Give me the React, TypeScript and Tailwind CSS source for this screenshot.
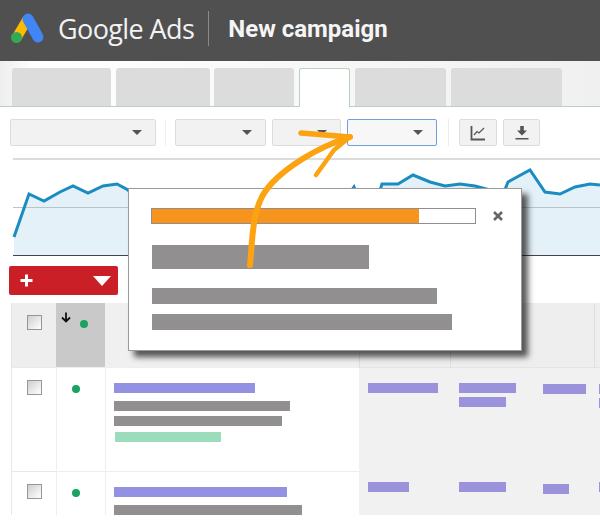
import type { ReactNode } from "react";

function Caret() {
  return <span className="w-0 h-0 border-x-[5px] border-t-[5px] border-x-transparent border-t-[#555]" />;
}

function Dropdown({ width, active }: { width: string; active?: boolean }) {
  return (
    <div
      className={`${width} h-[27px] flex items-center justify-end pr-[13px] rounded-[2px] border ${
        active ? "border-[#6f9fdc] bg-[#f7f7f7]" : "border-[#dcdcdc] bg-[#f2f2f2]"
      }`}
    >
      <Caret />
    </div>
  );
}

function IconButton({ children, width }: { children: ReactNode; width: string }) {
  return (
    <div className={`${width} h-[27px] flex items-center justify-center rounded-[2px] border border-[#dcdcdc] bg-[#f2f2f2]`}>
      {children}
    </div>
  );
}

function Bar({ className }: { className: string }) {
  return <div className={`h-[10px] ${className}`} />;
}

function Checkbox() {
  return <div className="w-[15px] h-[15px] border-[1.5px] border-[#969696] bg-gradient-to-br from-[#cfcfcf] to-white" />;
}

function Dot() {
  return <div className="w-2 h-2 rounded-full bg-[#1aa260]" />;
}

const line =
  "M14 237L29 194L44 201L60 192L73 186L88 193L103 186L117 184L128 190L135 200L345 200L354 187L358 197L378 197L382 184L398 184L413 175L430 182L445 186L460 184L475 186L490 190L504 192L508 182L517 177L530 170L545 192L560 194L575 187L590 184L600 185";

export default function App() {
  return (
    <div className="relative w-[600px] h-[525px] overflow-hidden bg-white font-['Roboto',sans-serif]">
      {/* header */}
      <header className="h-[61px] bg-[#505050] flex items-center pl-[10px] pb-[4px] text-white">
        <svg width="36" height="36" viewBox="0 0 36 36" className="shrink-0">
          <path d="M17 9L7 26" stroke="#fbbc04" strokeWidth="10" strokeLinecap="round" />
          <path d="M18 8L28 26" stroke="#4285f4" strokeWidth="11" strokeLinecap="round" />
          <circle cx="6.5" cy="26.5" r="5.5" fill="#34a853" />
        </svg>
        <span className="ml-[12px] text-[27px] leading-none text-[#f2f2f2] font-['Open_Sans',sans-serif] tracking-[-0.6px]">Google Ads</span>
        <div className="ml-[14px] w-px h-[35px] bg-[#8a8a8a]" />
        <span className="ml-[19px] text-[24px] leading-none font-bold text-[#f5f5f5]">New campaign</span>
      </header>

      {/* tabs */}
      <nav className="h-[46px] pt-[7px] pl-[12px] flex border-b border-[#b9d2bf] bg-gradient-to-r from-[#eeeeee] via-white via-[6%] to-[#f0f0f0]">
        <div className="w-[99px] rounded-t-[3px] bg-[#dcdcdc]" />
        <div className="ml-[5px] w-[94px] rounded-t-[3px] bg-[#dcdcdc]" />
        <div className="ml-[4px] w-[80px] rounded-t-[3px] bg-[#dcdcdc]" />
        <div className="ml-[5px] w-[51px] -mb-px rounded-t-[3px] bg-white border border-b-0 border-[#b9d2bf]" />
        <div className="ml-[5px] w-[91px] rounded-t-[3px] bg-[#dcdcdc]" />
        <div className="ml-[5px] w-[111px] rounded-t-[3px] bg-[#dcdcdc]" />
      </nav>

      {/* toolbar */}
      <div className="mt-[12px] pl-[10px] flex items-center">
        <Dropdown width="w-[146px]" />
        <div className="ml-[9px] w-px h-[27px] bg-[#f0f0f0]" />
        <div className="ml-[9px]">
          <Dropdown width="w-[91px]" />
        </div>
        <div className="ml-[6px]">
          <Dropdown width="w-[69px]" />
        </div>
        <div className="ml-[6px]">
          <Dropdown width="w-[90px]" active />
        </div>
        <div className="ml-[11px] w-px h-[27px] bg-[#ececec]" />
        <div className="ml-[10px] flex gap-[6px]">
          <IconButton width="w-[38px]">
            <svg width="16" height="16" viewBox="0 0 16 16" fill="none" stroke="#555">
              <path d="M1.5 1V14.5H15" strokeWidth="1.8" />
              <path d="M4 10L7 6.5L9 8L14 3" strokeWidth="1.2" />
            </svg>
          </IconButton>
          <IconButton width="w-[37px]">
            <svg width="14" height="16" viewBox="0 0 14 16" fill="#555">
              <path d="M5.2 1H8.8V5.5H12L7 10.5L2 5.5H5.2Z" />
              <rect x="0.5" y="13" width="13" height="1.5" />
            </svg>
          </IconButton>
        </div>
      </div>

      <div className="mt-[12px] ml-[13px] h-[2px] bg-[#dcdcdc]" />

      {/* chart */}
      <svg width="600" height="97" viewBox="0 160 600 97" className="block">
        <path d={`${line}V255H14Z`} fill="#e4f1f8" />
        <path d="M13 207.5H600" stroke="#b9c4ca" strokeWidth="1.2" />
        <path d="M13 255.5H600" stroke="#444" strokeWidth="1" />
        <path d={line} fill="none" stroke="#1b8cc0" strokeWidth="3" />
      </svg>

      {/* red button */}
      <div className="mt-[9px] ml-[9px] w-[109px] h-[29px] rounded-[2px] bg-[#cb1f27] flex items-center justify-between pl-[11px] pr-[7px]">
        <svg width="13" height="13" viewBox="0 0 13 13">
          <path d="M6.5 0.5V12.5M0.5 6.5H12.5" stroke="#fff" strokeWidth="3" />
        </svg>
        <span className="w-0 h-0 border-x-[9px] border-t-[10px] border-x-transparent border-t-white" />
      </div>

      {/* table */}
      <div className="mt-[8px] ml-[11px] grid grid-cols-[45px_49px_254px_91px_91px_53px_1fr] grid-rows-[64px_104px_44px]">
        {/* header row */}
        <div className="bg-[#eeeeee] border-l border-[#e4e4e4] pt-[12px] pl-[15px]">
          <Checkbox />
        </div>
        <div className="bg-[#c9c9c9] relative pt-[17px] pl-[24px]">
          <svg width="10" height="11" viewBox="0 0 10 11" className="absolute left-[5px] top-[9px]">
            <path d="M5 0.5V9M1 5.5L5 9.5L9 5.5" fill="none" stroke="#111" strokeWidth="1.8" />
          </svg>
          <Dot />
        </div>
        <div className="bg-[#f0f0f0]" />
        <div className="bg-[#eeeeee] border-l border-[#dedede]" />
        <div className="bg-[#eeeeee] border-l border-[#dedede]" />
        <div className="bg-[#eeeeee]" />
        <div className="bg-[#eeeeee] border-l border-[#dedede]" />

        {/* first row */}
        <div className="border-t border-l border-[#e8e8e8] pt-[12px] pl-[15px]">
          <Checkbox />
        </div>
        <div className="border-t border-l border-[#eeeeee] pt-[17px] pl-[15px]">
          <Dot />
        </div>
        <div className="border-t border-l border-[#eeeeee] pt-[15px] pl-[8px] flex flex-col">
          <Bar className="w-[141px] bg-[#9291e2]" />
          <Bar className="w-[176px] mt-[8px] bg-[#918f8f]" />
          <Bar className="w-[168px] mt-[5px] bg-[#918f8f]" />
          <Bar className="w-[106px] mt-[6px] ml-px bg-[#9bdcbc]" />
        </div>
        <div className="bg-[#f1f1f1] border-t border-[#e4e4e4] pt-[15px] pl-[9px]">
          <Bar className="w-[70px] bg-[#9a93dc]" />
        </div>
        <div className="bg-[#f1f1f1] border-t border-[#e4e4e4] pt-[15px] pl-[9px] flex flex-col gap-[4px]">
          <Bar className="w-[57px] bg-[#9a93dc]" />
          <Bar className="w-[47px] bg-[#9a93dc]" />
        </div>
        <div className="bg-[#f1f1f1] border-t border-[#e4e4e4] pt-[16px] pl-[2px]">
          <Bar className="w-[43px] bg-[#9a93dc]" />
        </div>
        <div className="bg-[#f1f1f1] border-t border-[#e4e4e4] pt-[16px] pl-[5px] flex flex-col gap-[4px]">
          <Bar className="w-[10px] bg-[#9a93dc]" />
          <Bar className="w-[10px] bg-[#9a93dc]" />
        </div>

        {/* second row */}
        <div className="border-t border-l border-[#e8e8e8] pt-[12px] pl-[15px]">
          <Checkbox />
        </div>
        <div className="border-t border-l border-[#eeeeee] pt-[17px] pl-[15px]">
          <Dot />
        </div>
        <div className="border-t border-l border-[#eeeeee] pt-[15px] pl-[8px] flex flex-col">
          <Bar className="w-[173px] bg-[#9291e2]" />
          <Bar className="w-[188px] mt-[8px] bg-[#918f8f]" />
        </div>
        <div className="bg-[#f1f1f1] pt-[11px] pl-[9px]">
          <Bar className="w-[41px] bg-[#9a93dc]" />
        </div>
        <div className="bg-[#f1f1f1] pt-[11px] pl-[9px]">
          <Bar className="w-[47px] bg-[#9a93dc]" />
        </div>
        <div className="bg-[#f1f1f1] pt-[13px] pl-[2px]">
          <Bar className="w-[26px] bg-[#9a93dc]" />
        </div>
        <div className="bg-[#f1f1f1] pt-[11px] pl-[5px]">
          <Bar className="w-[10px] bg-[#9a93dc]" />
        </div>
      </div>

      {/* modal */}
      <div className="absolute left-[128px] top-[188px] w-[394px] h-[163px] bg-white border border-[#9a9a9a] shadow-[6px_6px_6px_rgba(0,0,0,0.65)] pt-[19px] pl-[23px]">
        <div className="flex items-center">
          <div className="-ml-px w-[325px] h-[16px] border border-[#8f8f8f] bg-white">
            <div className="w-[267px] h-full bg-[#f7941d]" />
          </div>
          <svg width="10" height="10" viewBox="0 0 10 10" className="ml-[17px]">
            <path d="M1 1L9 9M9 1L1 9" stroke="#666" strokeWidth="2.6" />
          </svg>
        </div>
        <div className="mt-[21px] w-[217px] h-[24px] bg-[#918f8f]" />
        <div className="mt-[19px] w-[285px] h-[16px] bg-[#918f8f]" />
        <div className="mt-[10px] w-[300px] h-[16px] bg-[#918f8f]" />
      </div>

      {/* arrow */}
      <svg width="600" height="525" viewBox="0 0 600 525" fill="none" className="absolute left-0 top-0 pointer-events-none">
        <path d="M250 265C252 245 252 228 256 213C260 198 264 192 272 183C286 168 315 148 350 137" stroke="#fca311" strokeWidth="6" strokeLinecap="round" />
        <path d="M301 133L350 137" stroke="#fca311" strokeWidth="5.5" strokeLinecap="round" />
        <path d="M316 175L334 150L350 137" stroke="#fca311" strokeWidth="4.5" strokeLinecap="round" />
      </svg>
    </div>
  );
}
